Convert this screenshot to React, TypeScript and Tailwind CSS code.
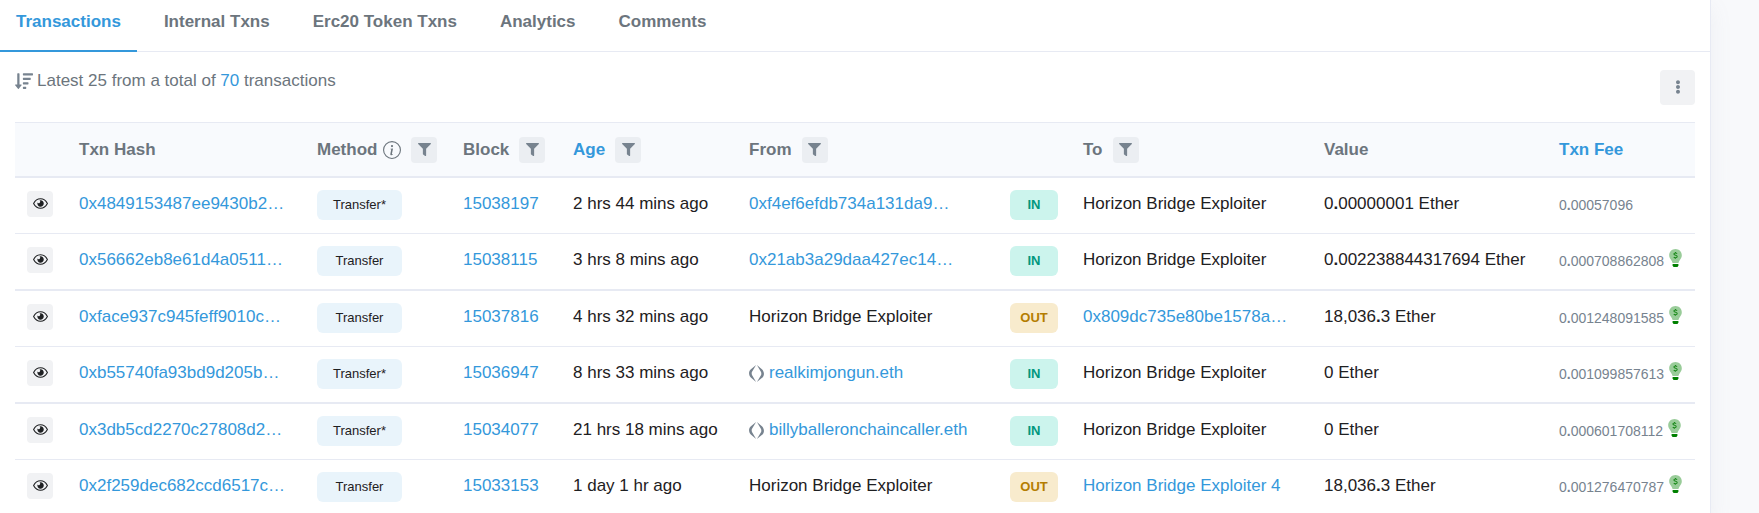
import React from 'react';
import { FaEllipsisV, FaFilter, FaSortAmountDown } from 'react-icons/fa';
import { BsInfoCircle } from 'react-icons/bs';

interface Txn {
  hash: string;
  method: string;
  block: string;
  age: string;
  from: string;
  fromLink?: boolean;
  ens?: boolean;
  direction: 'IN' | 'OUT';
  to: string;
  toLink?: boolean;
  value: string;
  fee: string;
  saved?: boolean;
}

const TABS = ['Transactions', 'Internal Txns', 'Erc20 Token Txns', 'Analytics', 'Comments'];

const EXPLOITER = 'Horizon Bridge Exploiter';

const TXNS: Txn[] = [
  { hash: '0x4849153487ee9430b2…', method: 'Transfer*', block: '15038197', age: '2 hrs 44 mins ago', from: '0xf4ef6efdb734a131da9…', fromLink: true, direction: 'IN', to: EXPLOITER, value: '0.00000001', fee: '0.00057096' },
  { hash: '0x56662eb8e61d4a0511…', method: 'Transfer', block: '15038115', age: '3 hrs 8 mins ago', from: '0x21ab3a29daa427ec14…', fromLink: true, direction: 'IN', to: EXPLOITER, value: '0.002238844317694', fee: '0.000708862808', saved: true },
  { hash: '0xface937c945feff9010c…', method: 'Transfer', block: '15037816', age: '4 hrs 32 mins ago', from: EXPLOITER, direction: 'OUT', to: '0x809dc735e80be1578a…', toLink: true, value: '18,036.3', fee: '0.001248091585', saved: true },
  { hash: '0xb55740fa93bd9d205b…', method: 'Transfer*', block: '15036947', age: '8 hrs 33 mins ago', from: 'realkimjongun.eth', fromLink: true, ens: true, direction: 'IN', to: EXPLOITER, value: '0', fee: '0.001099857613', saved: true },
  { hash: '0x3db5cd2270c27808d2…', method: 'Transfer*', block: '15034077', age: '21 hrs 18 mins ago', from: 'billyballeronchaincaller.eth', fromLink: true, ens: true, direction: 'IN', to: EXPLOITER, value: '0', fee: '0.000601708112', saved: true },
  { hash: '0x2f259dec682ccd6517c…', method: 'Transfer', block: '15033153', age: '1 day 1 hr ago', from: EXPLOITER, direction: 'OUT', to: 'Horizon Bridge Exploiter 4', toLink: true, value: '18,036.3', fee: '0.001276470787', saved: true },
];

const Link: React.FC<{ children: React.ReactNode }> = ({ children }) => (
  <a href="#" className="text-[#3498db]">{children}</a>
);

// The decimal point is drawn bold so that it stands out in long amounts
const Amount: React.FC<{ value: string }> = ({ value }) => {
  const [whole, decimals] = value.split('.');
  return (
    <>
      {whole}
      {decimals && <b>.</b>}
      {decimals}
    </>
  );
};

const FilterButton: React.FC<{ label: string }> = ({ label }) => (
  <button type="button" aria-label={label} className="flex size-[26px] items-center justify-center rounded bg-[#ebeef2] pb-0.5 text-[#77838f]">
    <FaFilter size={13} />
  </button>
);

const EyeIcon = () => (
  <svg width="15" height="11" viewBox="0 0 15 11" aria-hidden="true">
    <path d="M0.6 5.5 C2.2 2.4 4.6 0.8 7.5 0.8 C10.4 0.8 12.8 2.4 14.4 5.5 C12.8 8.6 10.4 10.2 7.5 10.2 C4.6 10.2 2.2 8.6 0.6 5.5 Z" fill="none" stroke="#1e2022" strokeWidth="1.1" />
    <path d="M7.5 2.3 A3.2 3.2 0 1 1 4.5 4.6 A1.5 1.5 0 1 0 6.6 2.5 Z" fill="#1e2022" />
  </svg>
);

const EnsIcon = () => (
  <svg width="15" height="17" viewBox="0 0 15 17" fill="#77838f" aria-hidden="true" className="shrink-0">
    <path d="M7.1 0 L2.9 7 C2.6 7.8 2.6 9 3 10 L7.1 17 L1.8 12.6 C0.4 11 -0.1 9.2 0.1 7.6 C0.3 6 1 4.8 2.2 3.9 Z" />
    <path d="M7.9 17 L12.1 10 C12.4 9.2 12.4 8 12 7 L7.9 0 L13.2 4.4 C14.6 6 15.1 7.8 14.9 9.4 C14.7 11 14 12.2 12.8 13.1 Z" />
  </svg>
);

const SavingsIcon = () => (
  <svg width="13" height="18" viewBox="0 0 13 18" aria-hidden="true" className="shrink-0">
    <path d="M6.5 0 C2.9 0 0.2 2.8 0.2 6.2 C0.2 7.9 0.8 9.3 1.8 10.5 C2.6 11.5 3.3 12.7 3.6 14 H9.4 C9.7 12.7 10.4 11.5 11.2 10.5 C12.2 9.3 12.8 7.9 12.8 6.2 C12.8 2.8 10.1 0 6.5 0 Z" fill="#99cc99" />
    <path d="M3.6 15 H9.4 V16.4 L8.5 18 H4.5 L3.6 16.4 Z" fill="#008000" />
    <path d="M8.1 4.6 C7.6 4.1 7.1 4 6.5 4 C5.5 4 4.9 4.5 4.9 5.1 C4.9 6.7 8.2 5.8 8.2 7.6 C8.2 8.3 7.5 8.8 6.5 8.8 C5.8 8.8 5.2 8.6 4.8 8.1 M6.5 3 V4 M6.5 8.8 V9.8" fill="none" stroke="#1c8a1c" strokeWidth="1.1" />
  </svg>
);

const App: React.FC = () => {
  const head = 'border-t border-b-2 border-[#e7eaf3] px-3 pt-[14px] pb-[13px] text-left align-top font-bold';

  return (
    <div className="h-screen overflow-hidden bg-[#f8f9fb] pr-12 font-['Liberation_Sans',Arial,sans-serif] text-[17px] leading-[26px] text-[#1e2022]">
      <main className="min-h-screen border-r border-[#e7eaf3] bg-white shadow-[0_8px_20px_rgba(140,152,164,0.1)]">
        <nav className="flex gap-[11px] border-b border-[#e7eaf3] font-bold text-[#6c757d]">
          {TABS.map((tab, i) => (
            <a
              key={tab}
              href="#"
              className={
                i === 0
                  ? '-mb-px border-b-2 border-[#3498db] px-4 pt-[9px] pb-[15px] text-[#3498db]'
                  : 'px-4 pt-[9px] pb-4'
              }
            >
              {tab}
            </a>
          ))}
        </nav>

        <div className="px-[15px]">
          <div className="flex items-start justify-between pb-[17px] text-[#77838f]">
            <p className="flex items-center gap-1 pt-4 text-[#6c757d]">
              <FaSortAmountDown size={18} className="text-[#77838f]" />
              <span>
                Latest 25 from a total of <Link>70</Link> transactions
              </span>
            </p>
            <button type="button" aria-label="More options" className="mt-[18px] flex size-[35px] items-center justify-center rounded bg-[#f1f2f4] pb-0.5">
              <FaEllipsisV size={14} />
            </button>
          </div>

          <table className="w-full table-fixed border-separate border-spacing-0 whitespace-nowrap">
            <colgroup>
              <col className="w-[52px]" />
              <col className="w-[238px]" />
              <col className="w-[146px]" />
              <col className="w-[110px]" />
              <col className="w-[176px]" />
              <col className="w-[261px]" />
              <col className="w-[73px]" />
              <col className="w-[241px]" />
              <col className="w-[235px]" />
              <col />
            </colgroup>
            <thead className="bg-[#f8fafd] text-[#6c757d]">
              <tr>
                <th className={head}></th>
                <th className={head}>Txn Hash</th>
                <th className={head}>
                  <div className="flex items-center">
                    Method
                    <BsInfoCircle size={18} className="ml-1.5" />
                    <span className="ml-[10px]"><FilterButton label="Filter by method" /></span>
                  </div>
                </th>
                <th className={head}>
                  <div className="flex items-center gap-[10px]">Block <FilterButton label="Filter by block" /></div>
                </th>
                <th className={head}>
                  <div className="flex items-center gap-[10px]"><Link>Age</Link> <FilterButton label="Filter by age" /></div>
                </th>
                <th className={head}>
                  <div className="flex items-center gap-[10px]">From <FilterButton label="Filter by sender" /></div>
                </th>
                <th className={head}></th>
                <th className={head}>
                  <div className="flex items-center gap-[10px]">To <FilterButton label="Filter by recipient" /></div>
                </th>
                <th className={head}>Value</th>
                <th className={head}><Link>Txn Fee</Link></th>
              </tr>
            </thead>
            <tbody className="leading-7">
              {TXNS.map((txn, i) => {
                const line = i % 2 === 1 ? 'border-b-2' : 'border-b';
                const cell = `${line} border-[#e7eaf3] px-3 pt-3 pb-[13px] align-top`;
                return (
                  <tr key={txn.hash}>
                    <td className={cell}>
                      <button type="button" aria-label="Quick view" className="mt-px flex size-[26px] items-center justify-center rounded bg-[#f1f2f4] pb-0.5">
                        <EyeIcon />
                      </button>
                    </td>
                    <td className={cell}><Link>{txn.hash}</Link></td>
                    <td className={cell}>
                      <span className="flex h-[30px] w-[85px] items-center justify-center rounded-md bg-[#e9f4fb] text-[13px]">{txn.method}</span>
                    </td>
                    <td className={cell}><Link>{txn.block}</Link></td>
                    <td className={cell}>{txn.age}</td>
                    <td className={cell}>
                      <div className="flex items-center gap-[5px]">
                        {txn.ens && <EnsIcon />}
                        {txn.fromLink ? <Link>{txn.from}</Link> : txn.from}
                      </div>
                    </td>
                    <td className={cell}>
                      <span
                        className={
                          txn.direction === 'IN'
                            ? 'flex h-[30px] w-12 items-center justify-center rounded-md bg-[#ccf4ed] text-[13px] font-bold text-[#02977e]'
                            : 'flex h-[30px] w-12 items-center justify-center rounded-md bg-[#f8ebcd] text-[13px] font-bold text-[#b47d00]'
                        }
                      >
                        {txn.direction}
                      </span>
                    </td>
                    <td className={cell}>{txn.toLink ? <Link>{txn.to}</Link> : txn.to}</td>
                    <td className={cell}><Amount value={txn.value} /> Ether</td>
                    <td className={cell}>
                      <div className="flex items-start gap-[5px] text-sm leading-[30px] text-[#77838f]">
                        <span><Amount value={txn.fee} /></span>
                        {txn.saved && <span className="pt-[3px]"><SavingsIcon /></span>}
                      </div>
                    </td>
                  </tr>
                );
              })}
            </tbody>
          </table>
        </div>
      </main>
    </div>
  );
};

export default App;
